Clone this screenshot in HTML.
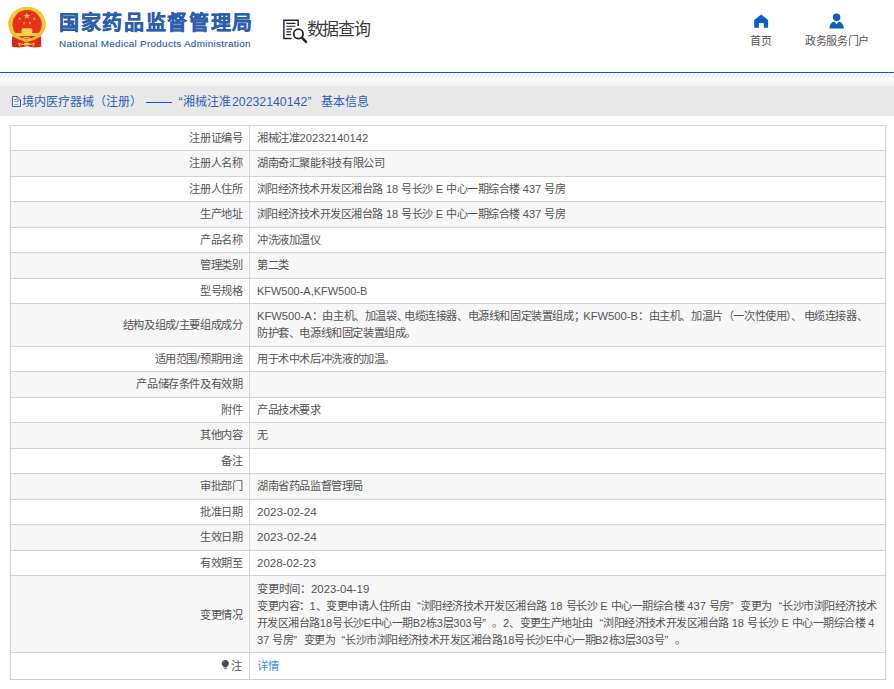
<!DOCTYPE html>
<html lang="zh-CN"><head><meta charset="utf-8">
<style>
*{margin:0;padding:0;box-sizing:border-box}
html,body{width:894px;height:689px;overflow:hidden;background:#fff;font-family:"Liberation Sans",sans-serif;color:#555}
i{font-style:normal}
.hdr{position:absolute;left:0;top:0;width:894px;height:72px;background:#fff}
.emb{position:absolute;left:0;top:0}
.t1{position:absolute;left:59px;top:10px;font-size:20px;letter-spacing:1.65px;-webkit-text-stroke:0.35px #2b5eae;font-weight:bold;color:#2b5eae;white-space:nowrap;line-height:26px}
.t2{position:absolute;left:59px;top:37px;font-size:9.9px;letter-spacing:0.31px;-webkit-text-stroke:0.15px #2b5eae;color:#2b5eae;white-space:nowrap;line-height:13px}
.sq{position:absolute;left:280px;top:16px}
.ico{position:absolute}
.sqt{position:absolute;left:306.5px;top:17.5px;font-size:17px;letter-spacing:-1.3px;color:#3a3a3a;line-height:24px;white-space:nowrap}
.nav{position:absolute;text-align:center;font-size:11px;color:#555;white-space:nowrap;line-height:16px}
.blue{position:absolute;left:0;top:72px;width:894px;height:1px;background:#0b5fc6}
.stripe{position:absolute;left:0;top:73px;width:894px;height:4px;background:repeating-linear-gradient(135deg,#fff 0,#fff 1.6px,#e9e9e9 1.6px,#e9e9e9 2.83px)}
.grad{position:absolute;left:0;top:78px;width:894px;height:8px;background:linear-gradient(#fff,#f0f0f0)}
.band{position:absolute;left:0;top:86px;width:894px;height:30px;background:#e8e8e8}
.dico{position:absolute;left:11px;top:95px}
.bt{position:absolute;left:0;top:94px;font-size:12px;color:#2d5fbf;line-height:16px;white-space:nowrap}
.bt span{position:absolute;top:0}
.tb{position:absolute;left:10px;top:125px;width:876px;height:555px;border:1px solid #d0d0d0;border-top:0}
.r{position:absolute;left:10px;width:876px;border-top:1px solid #d4d4d4;background:#fff;font-size:11.2px;line-height:17px;white-space:nowrap}
.r.g{background:#f7f7f7}
.c{letter-spacing:-0.4px}
.r .l{position:absolute;left:1px;top:0;bottom:0;width:238px;display:flex;align-items:center;justify-content:flex-end;padding-right:6.5px}
.r .v{position:absolute;left:240px;top:0;bottom:0;display:flex;align-items:center;padding-left:7px}
.r .v>br{}
.vl{position:absolute;left:249px;top:125px;width:1px;height:554px;background:#d4d4d4}
.lnk{color:#3b8ef3}
.sh .l>div,.sh .v>div{transform:translateY(1px)}
.zh .l>div{transform:translateX(-1.2px)}
.ln{transform-origin:0 50%}
.bulb{margin-right:1px}
.ql,.qr{display:inline-block;width:10.47px;letter-spacing:0}
.ql{text-align:right}.qr{text-align:left}
</style></head><body>
<div class="hdr">
<svg class="emb" viewBox="0 0 54 50" width="54" height="50">
<defs><radialGradient id="gd" cx="50%" cy="40%" r="60%"><stop offset="0" stop-color="#fcd64c"/><stop offset="0.8" stop-color="#f5c535"/><stop offset="1" stop-color="#eab12a"/></radialGradient></defs>
<path d="M12.3 36 L11.8 46.8 L19.2 47.4 L27 46.2 L33.8 47.4 L41.2 46.8 L41 36 Q27 45 12.3 36Z" fill="#e2231a"/>
<ellipse cx="27" cy="24" rx="18.9" ry="17.3" fill="url(#gd)"/>
<ellipse cx="27.1" cy="24.4" rx="14.6" ry="14.3" fill="#e8301f"/>
<g fill="#f6d03c">
<path d="M26.8 12.4l0.85 2.5h2.65l-2.15 1.55 0.82 2.55-2.17-1.57-2.17 1.57 0.82-2.55-2.15-1.55h2.65z"/>
<path d="M19.7 17l0.4 1.15h1.2l-0.98 0.7 0.38 1.15-1-0.72-1 0.72 0.38-1.15-0.98-0.7h1.2z"/>
<path d="M34.3 17l0.4 1.15h1.2l-0.98 0.7 0.38 1.15-1-0.72-1 0.72 0.38-1.15-0.98-0.7h1.2z"/>
<path d="M24.1 21.4l0.4 1.15h1.2l-0.98 0.7 0.38 1.15-1-0.72-1 0.72 0.38-1.15-0.98-0.7h1.2z"/>
<path d="M29.9 21.4l0.4 1.15h1.2l-0.98 0.7 0.38 1.15-1-0.72-1 0.72 0.38-1.15-0.98-0.7h1.2z"/>
</g>
<path d="M22 28.3h9.7v1.6h-9.7z" fill="#f8db5a"/>
<path d="M21 29.8h11.8l-0.6 1.4h-10.6z" fill="#f7d24a"/>
<path d="M21.6 31.1h10.6v2h-10.6z" fill="#f7d85c"/>
<path d="M15.8 33h22.2v2.9h-22.2z" fill="#f7d03c"/>
<ellipse cx="26.4" cy="39.4" rx="3.8" ry="1.9" fill="none" stroke="#f5cc3c" stroke-width="1.1"/>
<path d="M18.5 43 L20 46.5 M34.5 43 L33 46.5" stroke="#f2c53a" stroke-width="1.1"/>
<path d="M18.5 43.3 Q22.5 45 26.5 44.2 Q30.5 45 34.5 43.3" stroke="#f2c53a" stroke-width="1.1" fill="none"/>
<ellipse cx="26.6" cy="44.1" rx="3.2" ry="1.5" fill="#f4cb3a"/>
</svg>
<div class="t1">国家药品监督管理局</div>
<div class="t2">National Medical Products Administration</div>
<svg class="sq" viewBox="280 16 30 30" width="30" height="30">
<path d="M291.6 38.5H283.9V20.3H298.2V26" fill="none" stroke="#24233a" stroke-width="1.45"/>
<g stroke="#24233a" stroke-width="1.1">
<path d="M286.3 23.4h9.2M286.3 26.3h9.2M286.3 29.1h5.8M286.3 31.9h4.6M286.3 34.6h4.6"/>
</g>
<circle cx="298.4" cy="33.9" r="4.7" fill="none" stroke="#24233a" stroke-width="1.8"/>
<path d="M302 37.6L306 41.8" stroke="#24233a" stroke-width="2.5" stroke-linecap="round"/>
</svg>
<div class="sqt">数据查询</div>
<svg class="ico" style="left:750px;top:10px" width="22" height="22" viewBox="750 10 22 22">
<path d="M754.2 19.9L761.15 14.6L768.1 19.9V27.8H763.8V23H758.9V27.8H754.2Z" fill="#0b5ec3"/>
</svg>
<div class="nav" style="left:740px;width:42px;top:33px"><span style="letter-spacing:-0.1px">首页</span></div>
<svg class="ico" style="left:826px;top:10px" width="22" height="22" viewBox="826 10 22 22">
<circle cx="836.6" cy="17.3" r="3.75" fill="#0b5ec3"/>
<path d="M829.3 28.4C829.6 24.6 831.6 22.4 834.2 21.6L836.6 24.2L839 21.6C841.6 22.4 843.6 24.6 843.9 28.4Z" fill="#0b5ec3"/>
</svg>
<div class="nav" style="left:800px;width:74px;top:33px"><span class="c">政务服务门户</span></div>
</div>
<div class="blue"></div><div class="stripe"></div><div class="grad"></div>
<div class="band"></div><div style="position:absolute;left:0;top:115px;width:894px;height:1px;background:#e9eaf0"></div>
<svg class="dico" viewBox="11 95 11 13" width="11" height="13">
<path d="M12.4 96.5H17.3L20.5 99.7V106.4H12.4Z" fill="#fbfbfb" stroke="#2d5fc4" stroke-width="1"/>
<path d="M17 96.8V100H20.3" fill="none" stroke="#2d5fc4" stroke-width="0.8"/>
<path d="M14.2 99.5h1.8" stroke="#3a64c4" stroke-width="0.8"/>
<path d="M14.2 101.6h4.4M14.2 104.3h4.4" stroke="#7e8fd0" stroke-width="0.9"/>
</svg>
<div class="bt">
<span style="left:22px">境内医疗器械（注册）</span><i style="position:absolute;left:146px;top:8px;width:26px;height:1px;background:#0a60c6"></i><span style="left:178.5px">“</span><span style="left:183px">湘械注准</span><span style="left:232px;font-size:12.3px">20232140142</span><span style="left:307.5px">”</span><span style="left:321px">基本信息</span>
</div>
<div class="r" style="top:125px;height:25px"><div class="l"><div><span class="c">注册证编号</span></div></div><div class="v"><div><div class="ln" id="ln0_0" style="transform:scaleX(1.0037)"><span class="c">湘械注准</span>20232140142</div></div></div></div>
<div class="r g" style="top:150px;height:26px"><div class="l"><div><span class="c">注册人名称</span></div></div><div class="v"><div><div class="ln" id="ln1_0" style="transform:scaleX(1.0016)"><span class="c">湖南奇汇聚能科技有限公司</span></div></div></div></div>
<div class="r" style="top:176px;height:25px"><div class="l"><div><span class="c">注册人住所</span></div></div><div class="v"><div><div class="ln" id="ln2_0" style="transform:scaleX(0.989)"><span class="c">浏阳经济技术开发区湘台路</span> 18 <span class="c">号长沙</span> E <span class="c">中心一期综合楼</span> 437 <span class="c">号房</span></div></div></div></div>
<div class="r g" style="top:201px;height:26px"><div class="l"><div><span class="c">生产地址</span></div></div><div class="v"><div><div class="ln" id="ln3_0" style="transform:scaleX(0.989)"><span class="c">浏阳经济技术开发区湘台路</span> 18 <span class="c">号长沙</span> E <span class="c">中心一期综合楼</span> 437 <span class="c">号房</span></div></div></div></div>
<div class="r" style="top:227px;height:25px"><div class="l"><div><span class="c">产品名称</span></div></div><div class="v"><div><div class="ln" id="ln4_0" style="transform:scaleX(1)"><span class="c">冲洗液加温仪</span></div></div></div></div>
<div class="r g" style="top:252px;height:26px"><div class="l"><div><span class="c">管理类别</span></div></div><div class="v"><div><div class="ln" id="ln5_0" style="transform:scaleX(1)"><span class="c">第二类</span></div></div></div></div>
<div class="r" style="top:278px;height:25px"><div class="l"><div><span class="c">型号规格</span></div></div><div class="v"><div><div class="ln" id="ln6_0" style="transform:scaleX(0.9803)">KFW500-A,KFW500-B</div></div></div></div>
<div class="r g" style="top:303px;height:43px"><div class="l"><div><span class="c">结构及组成</span>/<span class="c">主要组成成分</span></div></div><div class="v"><div><div class="ln" id="ln7_0" style="position:relative;height:17px;width:610px"><span style="position:absolute;left:0px;top:0">KFW500-A<span class="c">：由主机、加温袋、</span></span><span style="position:absolute;left:147px;top:0"><span class="c">电缆连接器、电源线和固定装置组成；</span></span><span style="position:absolute;left:326.2px;top:0">KFW500-B<span class="c">：由主机、加温片（一次性使用）、</span></span><span style="position:absolute;left:546.5px;top:0"><span class="c">电缆连接器、</span></span></div><div class="ln" id="ln7_1" style="transform:scaleX(1.0001)"><span class="c">防护套、电源线和固定装置组成。</span></div></div></div></div>
<div class="r" style="top:346px;height:25px"><div class="l"><div><span class="c">适用范围</span>/<span class="c">预期用途</span></div></div><div class="v"><div><div class="ln" id="ln8_0" style="transform:scaleX(1.0016)"><span class="c">用于术中术后冲洗液的加温。</span></div></div></div></div>
<div class="r g" style="top:371px;height:26px"><div class="l"><div><span class="c">产品储存条件及有效期</span></div></div><div class="v"><div></div></div></div>
<div class="r" style="top:397px;height:25px"><div class="l"><div><span class="c">附件</span></div></div><div class="v"><div><div class="ln" id="ln10_0" style="transform:scaleX(1)"><span class="c">产品技术要求</span></div></div></div></div>
<div class="r g" style="top:422px;height:26px"><div class="l"><div><span class="c">其他内容</span></div></div><div class="v"><div><div class="ln" id="ln11_0" style="transform:scaleX(1)"><span class="c">无</span></div></div></div></div>
<div class="r" style="top:448px;height:25px"><div class="l"><div><span class="c">备注</span></div></div><div class="v"><div></div></div></div>
<div class="r g" style="top:473px;height:26px"><div class="l"><div><span class="c">审批部门</span></div></div><div class="v"><div><div class="ln" id="ln13_0" style="transform:scaleX(1.0)"><span class="c">湖南省药品监督管理局</span></div></div></div></div>
<div class="r" style="top:499px;height:25px"><div class="l"><div><span class="c">批准日期</span></div></div><div class="v"><div><div class="ln" id="ln14_0" style="transform:scaleX(1.046)">2023-02-24</div></div></div></div>
<div class="r g" style="top:524px;height:26px"><div class="l"><div><span class="c">生效日期</span></div></div><div class="v"><div><div class="ln" id="ln15_0" style="transform:scaleX(1.046)">2023-02-24</div></div></div></div>
<div class="r" style="top:550px;height:25px"><div class="l"><div><span class="c">有效期至</span></div></div><div class="v"><div><div class="ln" id="ln16_0" style="transform:scaleX(1.0284)">2028-02-23</div></div></div></div>
<div class="r g sh" style="top:575px;height:77px"><div class="l"><div><span class="c">变更情况</span></div></div><div class="v"><div><div class="ln" id="ln17_0" style="transform:scaleX(1.0183)"><span class="c">变更时间：</span>2023-04-19</div><div class="ln" id="ln17_1" style="transform:scaleX(0.992)"><span class="c">变更内容：</span>1<span class="c">、变更申请人住所由<i class="ql">“</i>浏阳经济技术开发区湘台路</span> 18 <span class="c">号长沙</span> E <span class="c">中心一期综合楼</span> 437 <span class="c">号房<i class="qr">”</i>变更为<i class="ql">“</i>长沙市浏阳经济技术</span></div><div class="ln" id="ln17_2" style="transform:scaleX(0.9868)"><span class="c">开发区湘台路</span>18<span class="c">号长沙</span>E<span class="c">中心一期</span>B2<span class="c">栋</span>3<span class="c">层</span>303<span class="c">号<i class="qr">”</i>。</span>2<span class="c">、变更生产地址由<i class="ql">“</i>浏阳经济技术开发区湘台路</span> 18 <span class="c">号长沙</span> E <span class="c">中心一期综合楼</span> 4</div><div class="ln" id="ln17_3" style="transform:scaleX(0.9864)">37 <span class="c">号房<i class="qr">”</i>变更为<i class="ql">“</i>长沙市浏阳经济技术开发区湘台路</span>18<span class="c">号长沙</span>E<span class="c">中心一期</span>B2<span class="c">栋</span>3<span class="c">层</span>303<span class="c">号<i class="qr">”</i>。</span></div></div></div></div>
<div class="r zh" style="top:652px;height:27px"><div class="l"><div><svg class="bulb" viewBox="0 0 10 11" width="9" height="11"><path d="M5 0.6C2.6 0.6 1 2.3 1 4.3c0 1.5 0.9 2.4 1.6 3.1 0.4 0.4 0.6 0.8 0.6 1.2h3.6c0-0.4 0.2-0.8 0.6-1.2C8.1 6.7 9 5.8 9 4.3 9 2.3 7.4 0.6 5 0.6z" fill="#4a4a4a"/><path d="M3.3 9.2h3.4v0.8H3.3zM3.8 10.3h2.4v0.6H3.8z" fill="#666"/><path d="M2.6 3.6c0.2-1 1-1.7 1.9-1.9" stroke="#9ab" stroke-width="0.7" fill="none"/></svg><span class="c">注</span></div></div><div class="v"><div><span class="lnk"><span class="c">详情</span></span></div></div></div>
<div class="vl"></div>
<div class="tb"></div>
</body></html>
